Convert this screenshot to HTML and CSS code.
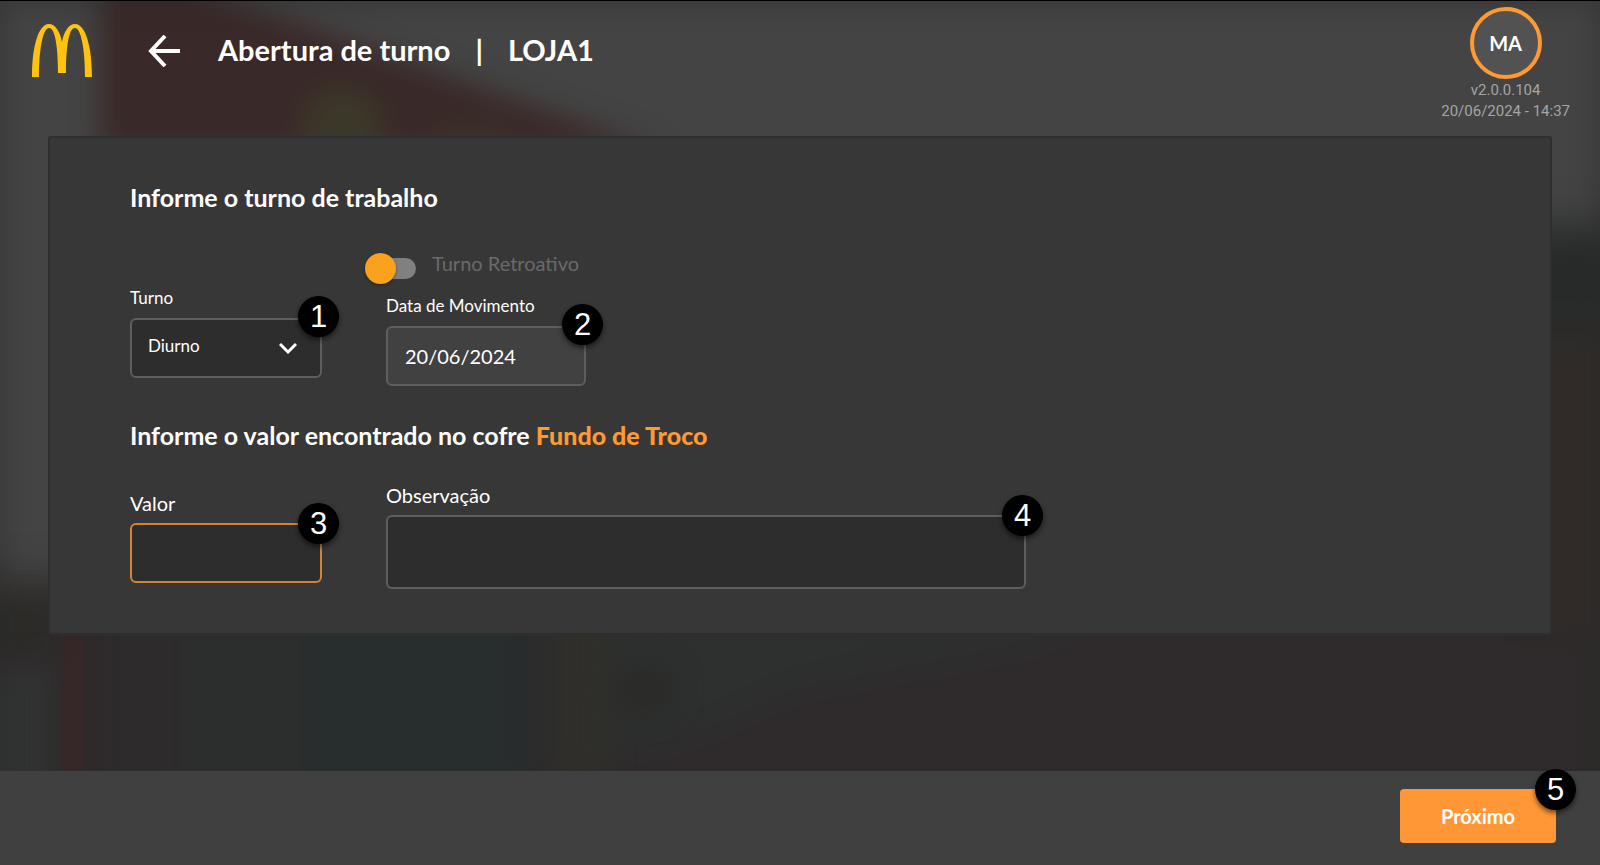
FILE: index.html
```html
<!DOCTYPE html>
<html lang="pt-BR">
<head>
<meta charset="utf-8">
<meta name="viewport" content="width=device-width, initial-scale=1">
<title>Abertura de turno</title>
<link rel="stylesheet" href="styles.css">
</head>
<body>
<div class="app">
  <svg class="backdrop" viewBox="0 0 1600 865" preserveAspectRatio="none" aria-hidden="true">
    <defs>
      <filter id="soft" x="-20%" y="-20%" width="140%" height="140%" color-interpolation-filters="sRGB"><feGaussianBlur stdDeviation="14"/></filter>
      <filter id="wide" x="-20%" y="-20%" width="140%" height="140%" color-interpolation-filters="sRGB"><feGaussianBlur stdDeviation="20"/></filter>
      <filter id="edge" x="-5%" y="-5%" width="110%" height="110%" color-interpolation-filters="sRGB"><feGaussianBlur stdDeviation="12"/></filter>
    </defs>
    <rect width="1600" height="865" fill="#444"/>
    <g filter="url(#wide)">
      <rect x="-60" y="580" width="1720" height="360" fill="#2f2a2b"/>
      <rect x="1500" y="225" width="160" height="110" fill="#282a2a"/>
      <rect x="1500" y="330" width="160" height="300" fill="#302b28"/>
      <rect x="-60" y="590" width="110" height="60" fill="#2b2b27"/>
      <path d="M560 610H1130L1040 645 800 690 690 740 590 760H560Z" fill="#2d302f"/>
    </g>
    <g filter="url(#soft)">
      <path d="M100-30H150L660 150H100Z" fill="#392928"/>
      <ellipse cx="342" cy="122" rx="42" ry="36" fill="#3b3829"/>
      <ellipse cx="470" cy="138" rx="36" ry="16" fill="#3b3228"/>
      <rect x="-40" y="665" width="90" height="150" fill="#313332"/>
      <rect x="90" y="600" width="110" height="200" fill="#2e2b2c"/>
      <rect x="180" y="600" width="130" height="200" fill="#2c2e2d"/>
      <rect x="300" y="600" width="235" height="200" fill="#282d2e"/>
      <rect x="555" y="600" width="50" height="180" fill="#302f2a"/>
      <ellipse cx="645" cy="690" rx="30" ry="25" fill="#2b2a28"/>
    </g>
    <rect x="62" y="600" width="20" height="200" fill="#3b2626" filter="url(#edge)"/>
    <g filter="url(#edge)" fill="none" stroke="#2a2a2a" stroke-width="18" opacity="0.6">
      <path d="M-6-6H1606V900M-6-6V900"/>
    </g>
  </svg>

  <header class="topbar">
    <svg class="logo" viewBox="0 0 60 53" role="img" aria-label="Logo">
      <path fill="#ffc20e" d="M0 53C0 24 6 0 17 0C23 0 28 7 30 18C32 7 37 0 43 0C54 0 60 24 60 53H53C53 25 49 4 43 4C37 4 34 22 34 49H26C26 22 23 4 17 4C11 4 7 25 7 53Z"/>
    </svg>
    <button class="back" type="button" aria-label="Voltar">
      <svg viewBox="0 0 32 32" fill="none" stroke="#fff" stroke-width="4"><path d="M32 16H3M17 1L3 16L17 31"/></svg>
    </button>
    <h1 class="title"><span>Abertura de turno</span><span>|</span><span>LOJA1</span></h1>
    <div class="user">
      <button class="avatar" type="button">MA</button>
      <span>v2.0.0.104</span>
      <span>20/06/2024 - 14:37</span>
    </div>
  </header>

  <main class="panel">
    <h2>Informe o turno de trabalho</h2>
    <div class="row shift">
      <div class="field narrow">
        <label for="turno">Turno</label>
        <div class="control">
          <select id="turno"><option>Diurno</option></select>
          <svg class="chevron" viewBox="0 0 18 12" fill="none" stroke="#fff" stroke-width="3" aria-hidden="true"><path d="M1 2L9 10L17 2"/></svg>
          <span class="badge">1</span>
        </div>
      </div>
      <div class="field date">
        <label class="toggle"><input type="checkbox" role="switch"><span>Turno Retroativo</span></label>
        <label for="data">Data de Movimento</label>
        <div class="control">
          <input class="text" id="data" type="text" value="20/06/2024" readonly>
          <span class="badge">2</span>
        </div>
      </div>
    </div>
    <h2>Informe o valor encontrado no cofre <strong>Fundo de Troco</strong></h2>
    <div class="row safe">
      <div class="field narrow large">
        <label for="valor">Valor</label>
        <div class="control">
          <input class="text active" id="valor" type="text">
          <span class="badge">3</span>
        </div>
      </div>
      <div class="field note large">
        <label for="obs">Observação</label>
        <div class="control">
          <textarea id="obs"></textarea>
          <span class="badge">4</span>
        </div>
      </div>
    </div>
  </main>

  <footer class="footer">
    <div class="control">
      <button class="next" type="button">Próximo</button>
      <span class="badge">5</span>
    </div>
  </footer>
</div>
</body>
</html>
```
FILE: styles.css
```css
* { box-sizing: border-box; }

body {
  margin: 0;
  color: #fff;
  background: #434343;
  font-family: Lato, sans-serif;
}

button, input, select, textarea { font: inherit; color: inherit; }

.app {
  position: relative;
  display: flex;
  flex-direction: column;
  min-height: 100vh;
  overflow: hidden;
  isolation: isolate;
  border-top: 1px solid #000;
}

.backdrop {
  position: absolute;
  inset: 0;
  z-index: -1;
  width: 100%;
  height: 100%;
}

.topbar {
  display: flex;
  align-items: flex-start;
  height: 135px;
  padding: 6px 30px 0 32px;
}

.logo { width: 60px; height: 53px; margin-top: 17px; }

.back {
  width: 32px;
  height: 32px;
  margin: 28px 38px 0 56px;
  padding: 0;
  border: 0;
  background: none;
}

.back svg { display: block; }

.title {
  display: flex;
  gap: 25px;
  margin: 25px 0 0;
  font-size: 29px;
  line-height: 36px;
  font-weight: 700;
}

.user {
  display: flex;
  flex-direction: column;
  align-items: center;
  margin-left: auto;
  color: #a5a5a5;
  font: 15px/21px Roboto, sans-serif;
}

.avatar {
  width: 72px;
  height: 72px;
  margin-bottom: 1px;
  padding: 0;
  border: 4px solid #ff9933;
  border-radius: 50%;
  background: #525252;
  color: #fff;
  font: 700 20px/24px Lato, sans-serif;
}

.panel {
  margin: 0 48px;
  padding: 43px 80px 44px;
  border: 2px solid #2e2e2e;
  border-radius: 3px;
  background: #373737;
}

h2 {
  margin: 0;
  font-size: 25px;
  line-height: 32px;
  font-weight: 700;
}

h2 strong { color: #ff9933; }

.row { display: flex; gap: 64px; }
.shift { margin: 38px 0 33px; align-items: flex-end; }
.shift .narrow { margin-bottom: 8px; }
.safe { margin-top: 32px; }
.safe .narrow { padding-top: 8px; }

.field {
  display: flex;
  flex-direction: column;
  gap: 8px;
  font-size: 17px;
  line-height: 24px;
}

.large { font-size: 20px; }
.narrow { width: 192px; }
.date { width: 200px; }
.note { width: 640px; }

.control { position: relative; display: flex; }

.text, select, textarea {
  width: 100%;
  height: 60px;
  margin: 0;
  padding: 0 17px;
  border: 2px solid #5e5e5e;
  border-radius: 6px;
  outline: 0;
  background: #2d2d2d;
}

select { padding: 0 16px 4px; appearance: none; }
.text { font-size: 20px; }
.text[readonly] { background: #414141; }
.text.active { border-color: #d28435; }
textarea { height: 74px; resize: none; }

.chevron {
  position: absolute;
  right: 25px;
  top: 24px;
  width: 18px;
  height: 12px;
  pointer-events: none;
}

.toggle {
  display: flex;
  align-items: flex-start;
  gap: 16px;
  margin: 0 0 7px -16px;
  color: #6a6a6a;
  font-size: 20px;
  white-space: nowrap;
}

.toggle input {
  position: relative;
  width: 46px;
  height: 21px;
  margin: 7px 0 0;
  border-radius: 11px;
  background: #808080;
  appearance: none;
}

.toggle input::before {
  content: "";
  position: absolute;
  left: -5px;
  top: -5px;
  width: 31px;
  height: 31px;
  border-radius: 50%;
  background: #faa21b;
  box-shadow: 0 1px 3px #0006;
}

.badge {
  position: absolute;
  top: -22px;
  right: -17px;
  width: 41px;
  height: 41px;
  border-radius: 50%;
  background: #000;
  box-shadow: 0 3px 5px #0008;
  font: 31px/41px "Liberation Sans", Arial, sans-serif;
  text-align: center;
}

.safe .badge, .footer .badge { top: -20px; }
.footer .badge { right: -20px; }

.footer {
  display: flex;
  justify-content: flex-end;
  margin-top: auto;
  padding: 18px 44px 22px;
  background: #404040;
}

.next {
  width: 156px;
  height: 54px;
  border: 0;
  border-radius: 4px;
  background: #ff9736;
  font-size: 20px;
  font-weight: 700;
}
```
